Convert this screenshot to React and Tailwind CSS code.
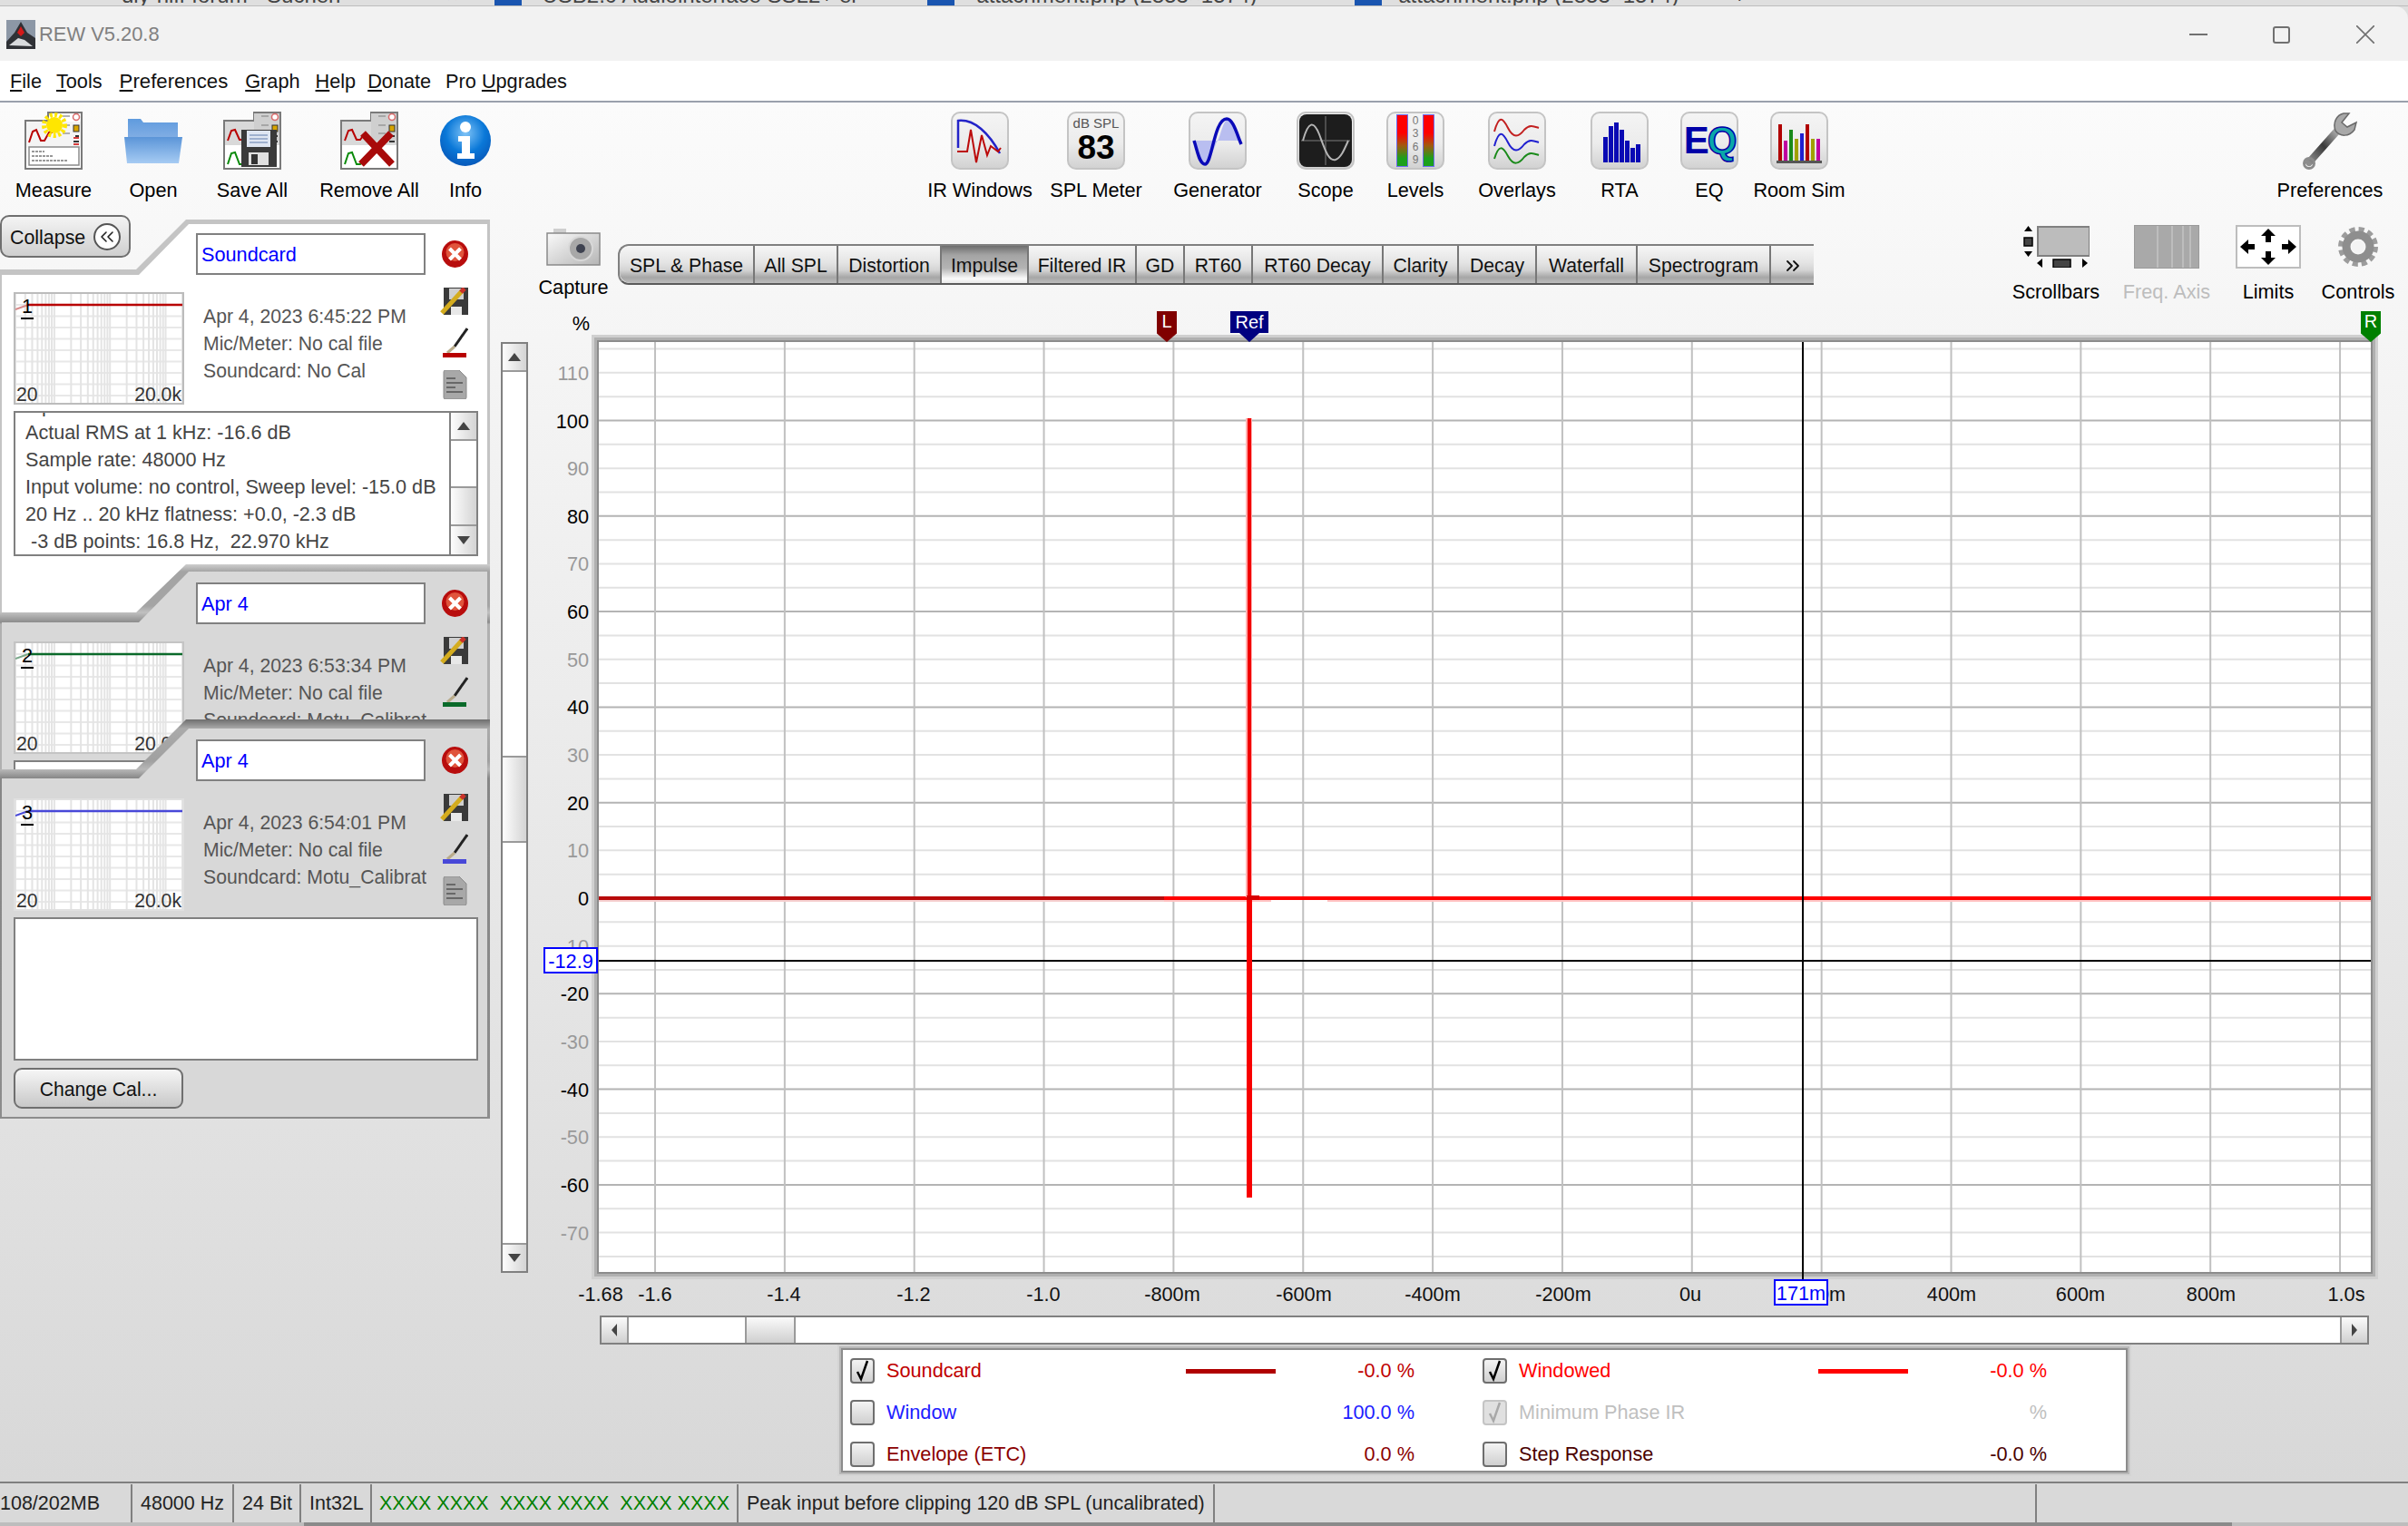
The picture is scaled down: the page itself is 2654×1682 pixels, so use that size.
import React from "react";
import { ChevronsLeft, ChevronsRight } from "lucide-react";

/* ---------- icons ---------- */
const AppIcon = () => (
  <svg width="32" height="32" viewBox="0 0 32 32">
    <rect width="32" height="32" fill="#8c97a6" />
    <path d="M0 24 L9 14 L16 2 L23 14 L32 20 L32 32 L0 32 Z" fill="#2f3136" />
    <path d="M3 28 L13 20 L20 22 L29 29 Z" fill="#d8dadd" />
    <path d="M16 7 L20 14 L16 18 L12 14 Z" fill="#d41919" />
  </svg>
);

const Sun = () => (
  <g>
    <circle cx="33" cy="15" r="9" fill="#ffe600" />
    <circle cx="33" cy="15" r="11.5" fill="none" stroke="#ffe600" strokeWidth="5" strokeDasharray="3 2.4" />
  </g>
);

const SideDots = () => (
  <g>
    <circle cx="57" cy="6" r="3.5" fill="#fff" stroke="#d86a6a" strokeWidth="1.5" />
    <rect x="54" y="15" width="6" height="7" fill="#d7a400" stroke="#333" strokeWidth="1" />
    <path d="M56 27 L60 27 M54 33 L60 33" stroke="#333" strokeWidth="2" />
    <path d="M42 5 H50 M42 15 H50 M42 24 H50" stroke="#999" strokeWidth="1.5" />
  </g>
);

const MeasureIcon = () => (
  <svg width="64" height="64" viewBox="0 0 64 64">
    <path d="M1 10 H26 L26 1 H63 V63 H1 Z" fill="#fff" stroke="#7a7a7a" strokeWidth="2" />
    <path d="M2 40 H62 V11 H2 Z" fill="#f4f4f4" />
    <path d="M5 34 L9 22 L13 20 L18 32 L22 32 L27 23 L31 23" fill="none" stroke="#b80000" strokeWidth="2" />
    <rect x="5" y="39" width="55" height="20" fill="#fff" stroke="#8a8a8a" strokeWidth="1.5" />
    <path d="M8 44 H22 M8 49 H32 M8 54 H48" stroke="#777" strokeWidth="1.5" strokeDasharray="3 1" />
    <SideDots />
    <path d="M54 29 L60 29 M54 36 L60 36" stroke="#c00" strokeWidth="1.5" />
    <Sun />
  </svg>
);

const FolderIcon = () => (
  <svg width="64" height="52" viewBox="0 0 64 52">
    <defs>
      <linearGradient id="fb" x1="0" y1="0" x2="0" y2="1">
        <stop offset="0" stopColor="#5b95d8" />
        <stop offset="1" stopColor="#a6cbf3" />
      </linearGradient>
      <linearGradient id="fa" x1="0" y1="0" x2="0" y2="1">
        <stop offset="0" stopColor="#5f9bde" />
        <stop offset="1" stopColor="#8db4e6" />
      </linearGradient>
    </defs>
    <path d="M4 28 V2 H18 L21 6 H59 V30 Z" fill="url(#fa)" />
    <path d="M0 22 H64 L60 51 H3 Z" fill="url(#fb)" />
  </svg>
);

const TwoPanels = () => (
  <g>
    <path d="M1 10 H34 V1 H63 V63 H1 Z" fill="#fff" stroke="#7a7a7a" strokeWidth="2" />
    <rect x="2" y="11" width="60" height="26" fill="#d9d9d9" />
    <rect x="34" y="2" width="28" height="30" fill="#cfcfcf" />
    <path d="M5 32 L9 21 L13 20 L18 31 L22 31 L27 24" fill="none" stroke="#b80000" strokeWidth="2" />
    <path d="M5 58 L9 46 L13 45 L18 58 L22 58 L27 50" fill="none" stroke="#0a8a0a" strokeWidth="2" />
    <SideDots />
  </g>
);

const SaveAllIcon = () => (
  <svg width="64" height="64" viewBox="0 0 64 64">
    <TwoPanels />
    <path d="M20 20 H59 V61 H20 Z" fill="#3a3a3a" />
    <rect x="26" y="21" width="26" height="18" fill="#dfe6f2" />
    <path d="M29 26 H49 M29 30 H49 M29 34 H49" stroke="#8aa0c4" strokeWidth="1.5" />
    <rect x="28" y="45" width="22" height="14" fill="#e0e0e0" />
    <rect x="31" y="47" width="7" height="11" fill="#333" />
  </svg>
);

const RemoveAllIcon = () => (
  <svg width="64" height="64" viewBox="0 0 64 64">
    <TwoPanels />
    <path d="M23 58 L56 24 M25 24 L57 58" stroke="#a80a0a" strokeWidth="8" />
  </svg>
);

const InfoIcon = () => (
  <svg width="56" height="56" viewBox="0 0 56 56">
    <defs>
      <radialGradient id="ig" cx="0.5" cy="0.35" r="0.7">
        <stop offset="0" stopColor="#7fc3f7" />
        <stop offset="0.55" stopColor="#0a78d8" />
        <stop offset="1" stopColor="#0753b4" />
      </radialGradient>
    </defs>
    <ellipse cx="28" cy="28" rx="28" ry="28" fill="url(#ig)" />
    <circle cx="28" cy="13" r="6" fill="#fff" />
    <path d="M20 23 H33 V42 H38 V48 H19 V42 H24 V29 H20 Z" fill="#fff" />
  </svg>
);

const Box = ({ children }) => (
  <div className="w-[64px] h-[64px] rounded-[10px] border-2 border-[#c4c4c4] bg-[linear-gradient(to_bottom,#f4f4f4,#ececec_55%,#d2d2d2)] overflow-hidden flex items-center justify-center">
    {children}
  </div>
);

const IRIcon = () => (
  <Box>
    <svg width="60" height="60" viewBox="0 0 60 60">
      <path d="M6 38 V8 C24 6 40 22 52 44" fill="none" stroke="#2424c8" strokeWidth="2.5" />
      <path d="M5 42 H16 L20 18 L26 54 L32 24 L38 46 L42 36 L50 42 L53 38" fill="none" stroke="#bb0a0a" strokeWidth="2" />
    </svg>
  </Box>
);

const SplIcon = () => (
  <Box>
    <div className="flex flex-col items-center text-center">
      <span className="text-[15px] leading-[16px] text-[#555]">dB SPL</span>
      <span className="text-[37px] leading-[38px] font-bold text-black">83</span>
    </div>
  </Box>
);

const GenIcon = () => (
  <Box>
    <svg width="60" height="60" viewBox="0 0 60 60">
      <path d="M4 30 H56 V32 C50 18 46 6 42 6 C36 6 32 30 30 30 C26 36 22 56 16 56 C10 56 8 42 4 30 Z" fill="#b9bef0" />
      <path d="M4 30 C8 42 10 56 16 56 C24 56 26 6 40 6 C47 6 51 22 56 34" fill="none" stroke="#0a0ab8" strokeWidth="3.5" />
    </svg>
  </Box>
);

const ScopeIcon = () => (
  <Box>
    <div className="w-[58px] h-[58px] rounded-[8px] bg-[#1d1d1d] flex items-center justify-center">
      <svg width="54" height="54" viewBox="0 0 54 54">
        <path d="M0 27 H54 M27 0 V54" stroke="#5c5c5c" strokeWidth="1.5" />
        <path d="M2 27 C8 5 14 5 20 20 C26 36 30 50 38 48 C44 46 48 36 52 27" fill="none" stroke="#b5b5b5" strokeWidth="2" />
      </svg>
    </div>
  </Box>
);

const LevelsIcon = () => (
  <Box>
    <div className="flex gap-[5px] items-stretch h-[58px]">
      <div className="w-[13px] border border-[#6c6cf0] bg-[linear-gradient(to_bottom,#ff0000_35%,#a05a10_60%,#1ca01c_85%)]" />
      <div className="flex flex-col justify-around text-[12px] leading-[13px] text-[#777]">
        <span>0</span>
        <span>3</span>
        <span>6</span>
        <span>9</span>
      </div>
      <div className="w-[13px] border border-[#6c6cf0] bg-[linear-gradient(to_bottom,#ff0000_35%,#a05a10_60%,#1ca01c_85%)]" />
    </div>
  </Box>
);

const OverlaysIcon = () => (
  <Box>
    <svg width="60" height="60" viewBox="0 0 60 60">
      <path d="M5 20 C10 2 14 4 20 16 C26 28 32 26 38 18 C44 12 48 14 54 16" fill="none" stroke="#c22020" strokeWidth="2" />
      <path d="M5 36 C10 18 14 20 20 32 C26 44 32 42 38 34 C44 28 48 30 54 32" fill="none" stroke="#2020d0" strokeWidth="2" />
      <path d="M5 50 C10 34 14 36 20 47 C26 58 32 56 38 48 C44 42 48 44 54 46" fill="none" stroke="#1a8a1a" strokeWidth="2" />
    </svg>
  </Box>
);

const RtaIcon = () => (
  <Box>
    <svg width="60" height="60" viewBox="0 0 60 60">
      {[
        [12, 26],
        [18, 14],
        [24, 10],
        [30, 18],
        [36, 30],
        [42, 38],
        [48, 34],
      ].map(([x, y]) => (
        <rect key={x} x={x} y={y} width="5" height={54 - y} fill="#0a0ab4" />
      ))}
    </svg>
  </Box>
);

const EqIcon = () => (
  <Box>
    <div className="text-[42px] leading-[46px] font-bold tracking-[-2px] flex">
      <span className="text-[#0000a8]">E</span>
      <span className="text-[#0aa8a8] [-webkit-text-stroke:1.5px_#0000a8]">Q</span>
    </div>
  </Box>
);

const RoomIcon = () => (
  <Box>
    <svg width="60" height="60" viewBox="0 0 60 60">
      {[
        [7, 12, "#b00000"],
        [13, 30, "#c000a0"],
        [19, 18, "#1a8a1a"],
        [25, 28, "#a0a000"],
        [31, 22, "#2020d0"],
        [37, 12, "#b00000"],
        [43, 28, "#a0a000"],
        [49, 28, "#c000a0"],
      ].map(([x, y, c]) => (
        <rect key={x} x={x} y={y} width="4" height={54 - y} fill={c} />
      ))}
      <rect x="5" y="52" width="50" height="3" fill="#555" />
    </svg>
  </Box>
);

const WrenchIcon = () => (
  <svg width="62" height="64" viewBox="0 0 62 64">
    <defs>
      <linearGradient id="wg" x1="0" y1="1" x2="1" y2="0">
        <stop offset="0" stopColor="#8e8e8e" />
        <stop offset="0.5" stopColor="#3a3a3a" />
        <stop offset="1" stopColor="#b8b8b8" />
      </linearGradient>
    </defs>
    <path d="M8 56 L40 20" stroke="url(#wg)" strokeWidth="8" strokeLinecap="round" />
    <circle cx="8" cy="57" r="5.5" fill="none" stroke="#8b8b8b" strokeWidth="3" />
    <path d="M46 2 C38 4 34 12 37 21 C42 28 52 28 58 20 L60 12 L50 17 L44 12 L52 2 Z" fill="#a8a8a8" stroke="#6a6a6a" strokeWidth="1.5" />
  </svg>
);

const CameraIcon = () => (
  <svg width="60" height="41" viewBox="0 0 60 41">
    <defs>
      <linearGradient id="cg" x1="0" y1="0" x2="1" y2="1">
        <stop offset="0" stopColor="#fafafa" />
        <stop offset="1" stopColor="#b5b5b5" />
      </linearGradient>
    </defs>
    <rect x="8" y="0" width="14" height="6" fill="#cfcfcf" />
    <rect x="1" y="5" width="58" height="35" fill="url(#cg)" stroke="#8a8a8a" strokeWidth="1.5" />
    <circle cx="38" cy="22" r="13" fill="#a8a8a8" stroke="#d8d8d8" strokeWidth="2" />
    <circle cx="38" cy="22" r="5" fill="#3e4250" />
  </svg>
);

const ScrollbarsIcon = () => (
  <svg width="73" height="47" viewBox="0 0 73 47">
    <rect x="16" y="2" width="57" height="32" fill="#bcbcbc" stroke="#808080" strokeWidth="2" />
    <path d="M1 7 L5.5 1 L10 7 Z M1 29 L5.5 35 L10 29 Z" fill="#000" />
    <rect x="1" y="14" width="9" height="9" fill="#444" stroke="#000" strokeWidth="1.5" />
    <path d="M21 42 L15 42 L21 37 Z M21 37 V47 L15 42 Z" fill="#000" />
    <rect x="33" y="38" width="19" height="9" fill="#444" stroke="#000" strokeWidth="1.5" />
    <path d="M65 37 L71 42 L65 47 Z" fill="#000" />
  </svg>
);

const FreqIcon = () => (
  <div className="w-[72px] h-[48px] bg-[#a9a9a9] border border-[#9a9a9a] flex">
    <div className="w-[26px] border-r-2 border-[#bdbdbd]" />
    <div className="w-[16px] border-r-2 border-[#bdbdbd]" />
    <div className="w-[12px] border-r-2 border-[#bdbdbd]" />
    <div className="w-[8px] border-r-2 border-[#bdbdbd]" />
  </div>
);

const LimitsIcon = () => (
  <div className="w-[72px] h-[48px] bg-white border-2 border-[#bdbdbd] flex items-center justify-center">
    <svg width="66" height="44" viewBox="0 0 66 44">
      <path d="M33 2 L41 10 L36 10 V17 H30 V10 L25 10 Z" fill="#000" />
      <path d="M33 42 L41 34 L36 34 V27 H30 V34 L25 34 Z" fill="#000" />
      <path d="M2 22 L11 14 V19 H18 V25 H11 V30 Z" fill="#000" />
      <path d="M64 22 L55 14 V19 H48 V25 H55 V30 Z" fill="#000" />
    </svg>
  </div>
);

const GearIcon = () => (
  <svg width="44" height="48" viewBox="0 0 44 44">
    <circle cx="22" cy="22" r="19" fill="none" stroke="#9c9c9c" strokeWidth="6" strokeDasharray="6 3.95" />
    <circle cx="22" cy="22" r="13" fill="none" stroke="#8e8e8e" strokeWidth="9" />
    <circle cx="22" cy="22" r="7" fill="#f4f4f4" />
  </svg>
);

const DeleteIcon = () => (
  <svg width="29" height="30" viewBox="0 0 29 30" className="shrink-0">
    <ellipse cx="14.5" cy="15" rx="14.5" ry="15" fill="#b80d0d" />
    <ellipse cx="14.5" cy="13" rx="10" ry="10" fill="#e0543c" />
    <path d="M8.5 9 L20.5 21 M20.5 9 L8.5 21" stroke="#fff" strokeWidth="4" />
  </svg>
);

const SaveIcon = () => (
  <svg width="32" height="30" viewBox="0 0 32 30">
    <path d="M4 0 H31 V30 H4 Z" fill="#3a3a3a" />
    <rect x="10" y="1" width="16" height="12" fill="#cfcfcf" />
    <rect x="12" y="21" width="12" height="9" fill="#e8e8e8" />
    <path d="M2 28 L24 4" stroke="#d4ac1e" strokeWidth="5" />
    <path d="M23 5 L27 1" stroke="#c8322a" strokeWidth="5" />
  </svg>
);

const PenIcon = ({ color }) => (
  <svg width="29" height="33" viewBox="0 0 29 33">
    <path d="M14 21 L28 1" stroke="#222" strokeWidth="3" />
    <path d="M6 28 L14 21" stroke="#b9ab8a" strokeWidth="3" />
    <rect x="1" y="28" width="26" height="5" fill={color} />
  </svg>
);

const DocIcon = () => (
  <svg width="27" height="32" viewBox="0 0 27 32">
    <path d="M1 2 Q1 0 3 0 H18 L26 8 V30 Q26 32 24 32 H3 Q1 32 1 30 Z" fill="#a8a8a8" stroke="#8a8a8a" />
    <path d="M4 9 H14 M4 14 H22 M4 19 H14 M4 24 H22" stroke="#686868" strokeWidth="2" />
  </svg>
);

/* ---------- small pieces ---------- */
const ToolBtn = ({ className, icon, label }) => (
  <div className={`flex flex-col items-center shrink-0 ${className}`}>
    <div className="h-[64px] mt-[10px] flex items-center justify-center">{icon}</div>
    <span className="mt-[10px] leading-[26px] whitespace-nowrap text-black">{label}</span>
  </div>
);

const Tri = ({ dir, className = "" }) => {
  const d = { up: "M0 9 L7 0 L14 9 Z", down: "M0 0 L14 0 L7 9 Z", left: "M9 0 V14 L3 7 Z", right: "M3 0 V14 L9 7 Z" }[dir];
  const s = dir === "up" || dir === "down" ? [14, 9] : [12, 14];
  return (
    <svg width={s[0]} height={s[1]} viewBox={`0 0 ${s[0]} ${s[1]}`} className={className}>
      <path d={d} fill="#444" />
    </svg>
  );
};

const sbV = "bg-[linear-gradient(to_right,#fdfdfd,#d4d4d4)]";

const VScroll = ({ className, upH, topTrack, thumbH }) => (
  <div className={`flex flex-col bg-white border-2 border-[#808080] shrink-0 ${className}`}>
    <div className={`${upH} ${sbV} border-b-2 border-[#9a9a9a] flex items-center justify-center shrink-0`}>
      <Tri dir="up" />
    </div>
    <div className={`${topTrack} shrink-0`} />
    <div className={`${thumbH} ${sbV} border-y-2 border-[#9a9a9a] shrink-0`} />
    <div className="flex-1" />
    <div className={`${upH} ${sbV} border-t-2 border-[#9a9a9a] flex items-center justify-center shrink-0`}>
      <Tri dir="down" />
    </div>
  </div>
);

const Thumb = ({ n, color, pale, bg }) => {
  const xs = [];
  for (const d of [1, 10, 100, 1000]) {
    for (let m = d === 1 ? 2 : 1; m <= 9; m++) {
      const f = m * d * 10;
      if (f >= 20 && f <= 20000) xs.push((184 * Math.log10(f / 20)) / 3);
    }
  }
  xs.push(184);
  const ys = [];
  for (let y = 12; y < 120; y += 12.5) ys.push(y);
  return (
    <div className={`relative w-[188px] h-[124px] bg-white border-2 ${bg} shrink-0 overflow-hidden`}>
      <svg width="184" height="120" viewBox="0 0 184 120" className="block">
        {ys.map((y) => (
          <line key={y} x1="0" x2="184" y1={y} y2={y} stroke="#e8e8e8" strokeWidth="2" />
        ))}
        {xs.map((x) => (
          <line key={x} x1={x} x2={x} y1="0" y2="120" stroke="#e4e4e4" strokeWidth="2" />
        ))}
        <path d="M0 17 L14 12" stroke={pale} strokeWidth="2" fill="none" />
        <path d="M14 12 H184" stroke={color} strokeWidth="2.5" fill="none" />
      </svg>
      <span className="absolute left-[7px] top-[2px] leading-[24px] text-black">{n}</span>
      <span className="absolute left-[6px] top-[26px] w-[14px] h-[2px] bg-black" />
      <span className="absolute left-[1px] -bottom-[3px] leading-[24px] text-[#333] text-[21.2px]">20</span>
      <span className="absolute right-[1px] -bottom-[3px] leading-[24px] text-[#333] text-[21.2px]">20.0k</span>
    </div>
  );
};

const PanelHead = ({ name }) => (
  <div className="flex items-start ml-[214px]">
    <div className="w-[253px] h-[46px] bg-white border-2 border-[#808080] pl-[4px] pt-[2px] flex items-center text-[#0000ff]">{name}</div>
    <div className="ml-[18px] mt-[8px]">
      <DeleteIcon />
    </div>
  </div>
);

const PanelInfo = ({ n, color, pale, thumbBorder, date, card, rowH = "h-[150px]" }) => (
  <div className={`flex ${rowH} items-start`}>
    <div className="ml-[13px] mt-[19px]">
      <Thumb n={n} color={color} pale={pale} bg={thumbBorder} />
    </div>
    <div className="ml-[21px] mt-[31px] w-[246px] overflow-hidden text-[#555] text-[21.2px] leading-[30px] whitespace-nowrap shrink-0">
      <div>{date}</div>
      <div>Mic/Meter: No cal file</div>
      <div>{card}</div>
    </div>
    <div className="ml-[15px] mt-[14px] flex flex-col items-center w-[32px] gap-[14px] shrink-0">
      <SaveIcon />
      <PenIcon color={color} />
      <DocIcon />
    </div>
  </div>
);

const CHECK = (
  <svg width="22" height="24" viewBox="0 0 22 24">
    <path d="M5 13 L9 21 L16 1" fill="none" stroke="currentColor" strokeWidth="2.5" />
  </svg>
);

const Check = ({ on, disabled }) => (
  <div
    className={`w-[27px] h-[28px] rounded-[4px] border-2 shrink-0 flex items-center justify-center ${
      disabled
        ? "border-[#c4c4c4] bg-[#e0e0e0] text-[#a8a8a8]"
        : "border-[#6e6e6e] bg-[linear-gradient(to_bottom,#f4f4f4,#d0d0d0)] text-black"
    }`}
  >
    {on && CHECK}
  </div>
);

const LegendCell = ({ on, disabled, label, swatch, value, color, className = "" }) => (
  <div className={`flex items-center shrink-0 ${className}`} style={{ color }}>
    <Check on={on} disabled={disabled} />
    <span className="ml-[13px] w-[330px] whitespace-nowrap">{label}</span>
    <div className="w-[99px] flex items-center">{swatch && <div className="w-full h-[5px]" style={{ background: swatch }} />}</div>
    <span className="w-[153px] text-right whitespace-nowrap">{value}</span>
  </div>
);

const Tab = ({ w, label, active, first, last }) => (
  <div
    className={`${w} shrink-0 h-full flex items-center justify-center pt-[2px] whitespace-nowrap text-[21.2px] text-[#111] ${last ? "" : "border-r-2 border-[#777]"} ${first ? "rounded-l-[12px]" : ""} ${
      active
        ? "bg-[linear-gradient(to_bottom,#6e6e6e,#a4a4a4_25%,#b4b4b4_60%,#fafafa_88%,#e8e8e8)]"
        : "bg-[linear-gradient(to_bottom,#f6f6f6,#e4e4e4_45%,#d4d4d4_65%,#a6a6a6_85%,#bcbcbc)]"
    }`}
  >
    {label}
  </div>
);

/* ---------- chart data ---------- */
const Y0 = 613;
const UNIT = 5.265;
const yOf = (v) => Y0 - v * UNIT;
const hLines = [];
for (let v = -75; v <= 115; v += 5) hLines.push(v);
const vLines = [];
for (let i = 0; i <= 13; i++) vLines.push(62 + 142.85 * i);
const yLabels = [];
for (let v = 110; v >= -70; v -= 10) yLabels.push(v);
const xLabels = [
  ["-1.68", 2],
  ["-1.6", 62],
  ["-1.4", 204],
  ["-1.2", 347],
  ["-1.0", 490],
  ["-800m", 632],
  ["-600m", 777],
  ["-400m", 919],
  ["-200m", 1063],
  ["0u", 1203],
  ["200m", 1347],
  ["400m", 1491],
  ["600m", 1633],
  ["800m", 1777],
  ["1.0s", 1926],
];

const Plot = () => (
  <svg width="1953" height="1025" viewBox="0 0 1953 1025" className="block overflow-visible">
    {hLines.map((v) => (
      <line key={v} x1="0" x2="1953" y1={yOf(v)} y2={yOf(v)} stroke={v % 20 === 0 ? "#b4b4b4" : "#e2e2e2"} strokeWidth="2" />
    ))}
    {vLines.map((x) => (
      <line key={x} x1={x} x2={x} y1="0" y2="1025" stroke="#c0c0c0" strokeWidth="2" />
    ))}
    <rect x="0" y="615" width="625" height="2" fill="#f6d0d0" />
    <rect x="0" y="611" width="623" height="4" fill="#b80a0a" />
    <rect x="623" y="615" width="118" height="2" fill="#ffc4c4" />
    <rect x="803" y="615" width="1150" height="2" fill="#ffc4c4" />
    <rect x="623" y="611" width="1330" height="4" fill="#ff0000" />
    <rect x="1326" y="0" width="2" height="1033" fill="#000" />
    <rect x="0" y="681" width="1953" height="2" fill="#000" />
    <rect x="713" y="84" width="7" height="528" fill="#ffb0b0" />
    <rect x="715" y="84" width="4" height="528" fill="#f20000" />
    <rect x="714" y="611" width="6" height="332" fill="#f80000" />
    <rect x="714" y="610" width="14" height="5" fill="#d80000" />
  </svg>
);

/* ---------- page ---------- */
export default function App() {
  return (
    <div className="w-[2654px] h-[1682px] overflow-hidden flex flex-col bg-[#dfdfdf] text-[21.7px] leading-[26px] font-['Liberation_Sans',Arial,sans-serif]">
      {/* browser tabs peeking above the window */}
      <div className="h-[7px] shrink-0 overflow-hidden flex items-start text-[24px] leading-[24px] text-[#444] whitespace-nowrap border-b border-[#bcbcbc]">
        <span className="ml-[134px] -mt-[17px]">diy-hifi-forum - Suchen</span>
        <span className="ml-[116px] -mt-[17px]">×</span>
        <div className="ml-[40px] w-[30px] h-[7px] bg-[#1a55b0]" />
        <span className="ml-[22px] -mt-[17px]">USB2.0 Audiointerface SSL2+ er</span>
        <div className="ml-[76px] w-[30px] h-[7px] bg-[#1a55b0]" />
        <span className="ml-[24px] -mt-[17px]">attachment.php (2853×1574)</span>
        <div className="ml-[108px] w-[30px] h-[7px] bg-[#1a55b0]" />
        <span className="ml-[18px] -mt-[17px]">attachment.php (2853×1574)</span>
        <span className="ml-[60px] -mt-[17px]">+</span>
      </div>

      {/* title bar */}
      <div className="h-[60px] shrink-0 bg-[#f2f2f2] rounded-tr-[14px] flex items-center pt-[2px] text-[#808080]">
        <div className="ml-[7px]">
          <AppIcon />
        </div>
        <span className="ml-[4px] text-[21.9px]">REW V5.20.8</span>
        <div className="ml-auto flex items-center mr-[37px]">
          <svg width="20" height="20" viewBox="0 0 20 20">
            <rect x="0" y="9" width="20" height="2" fill="#707070" />
          </svg>
          <div className="ml-[72px] w-[19px] h-[19px] rounded-[3px] border-2 border-[#707070]" />
          <svg width="20" height="20" viewBox="0 0 20 20" className="ml-[73px]">
            <path d="M0 0 L20 20 M20 0 L0 20" stroke="#707070" strokeWidth="1.6" />
          </svg>
        </div>
      </div>

      {/* menu bar */}
      <div className="h-[46px] shrink-0 bg-white border-b-2 border-[#9aa0ac] flex items-center pt-[1px] text-[#111] pl-[11px]">
        <span>
          <u>F</u>ile
        </span>
        <span className="ml-[16px]">
          <u>T</u>ools
        </span>
        <span className="ml-[19px] text-[22.2px]">
          <u>P</u>references
        </span>
        <span className="ml-[19px]">
          <u>G</u>raph
        </span>
        <span className="ml-[17px]">
          <u>H</u>elp
        </span>
        <span className="ml-[13px]">
          <u>D</u>onate
        </span>
        <span className="ml-[16px]">
          Pro <u>U</u>pgrades
        </span>
      </div>

      {/* window content */}
      <div className="flex-1 flex flex-col min-h-0 bg-[linear-gradient(to_bottom,#fbfbfb,#d8d8d8)]">
        {/* toolbar */}
        <div className="h-[112px] shrink-0 flex pl-[4px]">
          <ToolBtn className="w-[110px]" icon={<MeasureIcon />} label="Measure" />
          <ToolBtn className="w-[110px]" icon={<FolderIcon />} label="Open" />
          <ToolBtn className="w-[108px]" icon={<SaveAllIcon />} label="Save All" />
          <ToolBtn className="w-[150px]" icon={<RemoveAllIcon />} label="Remove All" />
          <ToolBtn className="w-[62px]" icon={<InfoIcon />} label="Info" />
          <ToolBtn className="w-[130px] ml-[471px]" icon={<IRIcon />} label="IR Windows" />
          <ToolBtn className="w-[126px]" icon={<SplIcon />} label="SPL Meter" />
          <ToolBtn className="w-[142px]" icon={<GenIcon />} label="Generator" />
          <ToolBtn className="w-[96px]" icon={<ScopeIcon />} label="Scope" />
          <ToolBtn className="w-[102px]" icon={<LevelsIcon />} label="Levels" />
          <ToolBtn className="w-[122px]" icon={<OverlaysIcon />} label="Overlays" />
          <ToolBtn className="w-[104px]" icon={<RtaIcon />} label="RTA" />
          <ToolBtn className="w-[94px]" icon={<EqIcon />} label="EQ" />
          <ToolBtn className="w-[104px]" icon={<RoomIcon />} label="Room Sim" />
          <ToolBtn className="w-[140px] ml-[463px]" icon={<WrenchIcon />} label="Preferences" />
        </div>

        <div className="flex-1 flex min-h-0">
          {/* left column: stacked measurement panels */}
          <div className="w-[552px] shrink-0 flex flex-col">
            <div className="relative z-10 mt-[12px] w-[144px] h-[47px] shrink-0 rounded-[10px] border-2 border-[#6f6f6f] bg-[linear-gradient(to_bottom,#f4f4f4,#cfcfcf)] flex items-center pl-[9px] pt-[2px] text-[#111]">
              <span className="text-[21.4px]">Collapse</span>
              <div className="ml-[9px] -mt-[2px] w-[30px] h-[30px] rounded-full bg-white border-2 border-[#555] flex items-center justify-center">
                <ChevronsLeft size={24} strokeWidth={1.6} color="#222" />
              </div>
            </div>

            {/* panel 1 */}
            <div className="relative -mt-[42px] w-[540px] h-[448px] shrink-0 bg-[#c4c4c4] pt-[5px] pl-[2px] pr-[3px] [clip-path:polygon(0_55px,150px_55px,205px_0,100%_0,100%_100%,0_100%)]">
              <div className="h-full bg-white pt-[10px] [clip-path:polygon(0_56px,151px_56px,206px_0,100%_0,100%_100%,0_100%)]">
                <PanelHead name="Soundcard" />
                <PanelInfo n="1" color="#b80000" pale="#d88a8a" thumbBorder="border-[#bcbcbc]" date="Apr 4, 2023 6:45:22 PM" card="Soundcard: No Cal" />
                <div className="ml-[13px] w-[512px] h-[160px] border-2 border-[#808080] flex overflow-hidden bg-white">
                  <div className="flex-1 min-w-0 pl-[11px] text-[#444] text-[21.6px] leading-[30px] whitespace-pre overflow-hidden">
                    <div className="-mt-[23px]">Input level: -14.6 dB</div>
                    <div>Actual RMS at 1 kHz: -16.6 dB</div>
                    <div>Sample rate: 48000 Hz</div>
                    <div>Input volume: no control, Sweep level: -15.0 dB</div>
                    <div>20 Hz .. 20 kHz flatness: +0.0, -2.3 dB</div>
                    <div> -3 dB points: 16.8 Hz,  22.970 kHz</div>
                  </div>
                  <div className="w-[30px] shrink-0 flex flex-col border-l-2 border-[#808080]">
                    <div className={`h-[31px] ${sbV} border-b-2 border-[#9a9a9a] flex items-center justify-center`}>
                      <Tri dir="up" />
                    </div>
                    <div className="h-[50px]" />
                    <div className={`h-[44px] ${sbV} border-y-2 border-[#9a9a9a]`} />
                    <div className={`flex-1 ${sbV} flex items-center justify-center`}>
                      <Tri dir="down" />
                    </div>
                  </div>
                </div>
              </div>
            </div>

            {/* panel 2 */}
            <div className="relative -mt-[68px] w-[540px] h-[238px] shrink-0 bg-[linear-gradient(to_bottom,#cecece,#a4a4a4_8px,#a4a4a4_46px,#c0c0c0_53px,#8c8c8c_64px,#b0b0b0_66px)] pt-[8px] pl-[2px] pr-[3px] [clip-path:polygon(0_53px,150px_53px,205px_0,100%_0,100%_100%,0_100%)]">
              <div className="h-full bg-[#d8d8d8] pt-[12px] [clip-path:polygon(0_56px,151px_56px,206px_0,100%_0,100%_100%,0_100%)]">
                <PanelHead name="Apr 4" />
                <PanelInfo n="2" color="#0a6a2a" pale="#7aa88a" thumbBorder="border-[#c4c4c4]" date="Apr 4, 2023 6:53:34 PM" card="Soundcard: Motu_Calibrat" />
                <div className="ml-[13px] w-[512px] h-[160px] border-2 border-[#808080] bg-white" />
              </div>
            </div>

            {/* panel 3 */}
            <div className="relative -mt-[67px] w-[540px] h-[440px] shrink-0 bg-[linear-gradient(to_bottom,#6e6e6e,#aaaaaa_10px,#a0a0a0_46px,#b8b8b8_55px,#868686_65px,#8c8c8c)] pt-[10px] pl-[2px] pr-[3px] pb-[2px] [clip-path:polygon(0_55px,150px_55px,205px_0,100%_0,100%_100%,0_100%)]">
              <div className="h-full bg-[#d8d8d8] pt-[12px] [clip-path:polygon(0_55px,151px_55px,206px_0,100%_0,100%_100%,0_100%)]">
                <PanelHead name="Apr 4" />
                <PanelInfo n="3" color="#4848d8" pale="#4848d8" thumbBorder="border-[#e0e0e0]" date="Apr 4, 2023 6:54:01 PM" card="Soundcard: Motu_Calibrat" rowH="h-[148px]" />
                <div className="ml-[13px] mt-[2px] w-[512px] h-[158px] border-2 border-[#808080] bg-white" />
                <div className="ml-[13px] mt-[8px] w-[187px] h-[45px] rounded-[9px] border-2 border-[#6f6f6f] bg-[linear-gradient(to_bottom,#f6f6f6,#c8c8c8)] flex items-center justify-center pt-[2px] text-[21.2px] text-[#111]">
                  Change Cal...
                </div>
              </div>
            </div>
          </div>

          {/* right column */}
          <div className="flex-1 min-w-0 flex flex-col">
            {/* graph selector row */}
            <div className="h-[118px] shrink-0 flex items-start">
              <div className="ml-[31px] w-[100px] pt-[27px] flex flex-col items-center">
                <CameraIcon />
                <span className="mt-[11px] leading-[26px] text-black">Capture</span>
              </div>
              <div className="mt-[44px] h-[45px] flex rounded-l-[12px] border-y-2 border-l-2 border-t-[#808080] border-b-[#5a5a5a] border-l-[#808080]">
                <Tab w="w-[149px]" label="SPL & Phase" first />
                <Tab w="w-[92px]" label="All SPL" />
                <Tab w="w-[114px]" label="Distortion" />
                <Tab w="w-[96px]" label="Impulse" active />
                <Tab w="w-[119px]" label="Filtered IR" />
                <Tab w="w-[53px]" label="GD" />
                <Tab w="w-[75px]" label="RT60" />
                <Tab w="w-[144px]" label="RT60 Decay" />
                <Tab w="w-[83px]" label="Clarity" />
                <Tab w="w-[86px]" label="Decay" />
                <Tab w="w-[111px]" label="Waterfall" />
                <Tab w="w-[147px]" label="Spectrogram" />
                <Tab w="w-[47px]" label={<ChevronsRight size={24} strokeWidth={1.8} color="#111" />} last />
              </div>
              <div className="ml-[207px] w-[120px] pt-[23px] flex flex-col items-center shrink-0">
                <div className="h-[48px]">
                  <ScrollbarsIcon />
                </div>
                <span className="mt-[13px] text-black whitespace-nowrap">Scrollbars</span>
              </div>
              <div className="ml-[7px] w-[110px] pt-[23px] flex flex-col items-center shrink-0">
                <FreqIcon />
                <span className="mt-[13px] text-[#bdbdbd] whitespace-nowrap">Freq. Axis</span>
              </div>
              <div className="ml-[17px] w-[80px] pt-[23px] flex flex-col items-center shrink-0">
                <LimitsIcon />
                <span className="mt-[13px] text-black">Limits</span>
              </div>
              <div className="ml-[4px] w-[110px] pt-[23px] flex flex-col items-center shrink-0">
                <GearIcon />
                <span className="mt-[13px] text-black">Controls</span>
              </div>
            </div>

            {/* chart */}
            <div className="h-[1059px] shrink-0 pt-[34px] flex items-start">
              <VScroll className="w-[30px] h-[1026px]" upH="h-[31px]" topTrack="h-[423px]" thumbH="h-[96px]" />
              <div className="relative ml-[78px] w-[1953px] h-[1025px] bg-white shadow-[0_0_0_2px_#8c8c8c,0_0_0_5px_#b0b0b0,0_0_0_8px_#d0d0d0]">
                <Plot />
                <span className="absolute right-[calc(100%+10px)] -top-[33px] leading-[26px] text-black font-medium">%</span>
                {yLabels.map((v) => (
                  <span
                    key={v}
                    className={`absolute right-[calc(100%+11px)] leading-[26px] whitespace-nowrap ${v % 20 === 0 ? "text-black" : "text-[#999]"}`}
                    style={{ top: yOf(v) - 12 }}
                  >
                    {v}
                  </span>
                ))}
                <div className="absolute -left-[61px] top-[667px] w-[60px] h-[29px] pt-[2px] bg-white border-2 border-[#0000ff] text-[#0000ff] flex items-center justify-center">-12.9</div>
                <div className="absolute left-[615px] -top-[34px] w-[22px] h-[34px] bg-[#800000] text-white text-center text-[20px] leading-[22px] [clip-path:polygon(0_0,100%_0,100%_72%,50%_100%,0_72%)]">L</div>
                <div className="absolute left-[696px] -top-[34px] w-[42px] h-[34px] bg-[#000080] text-white text-center text-[20px] leading-[24px] [clip-path:polygon(0_0,100%_0,100%_24px,32px_24px,50%_100%,10px_24px,0_24px)]">Ref</div>
                <div className="absolute left-[1942px] -top-[34px] w-[22px] h-[34px] bg-[#008000] text-white text-center text-[20px] leading-[22px] [clip-path:polygon(0_0,100%_0,100%_72%,50%_100%,0_72%)]">R</div>
              </div>
            </div>

            {/* x axis labels */}
            <div className="relative h-[48px] shrink-0 ml-[108px] w-[1953px]">
              {xLabels.map(([t, x]) => (
                <span key={t} className="absolute top-[12px] leading-[26px] -translate-x-1/2 whitespace-nowrap text-[#111]" style={{ left: x }}>
                  {t}
                </span>
              ))}
              <div className="absolute left-[1295px] top-[8px] w-[60px] h-[29px] pt-[2px] bg-white border-2 border-[#0000ff] text-[#0000ff] flex items-center justify-center">171m</div>
            </div>

            {/* horizontal scrollbar */}
            <div className="ml-[109px] w-[1950px] h-[32px] shrink-0 flex bg-white border-2 border-[#808080]">
              <div className="w-[30px] bg-[linear-gradient(to_bottom,#fafafa,#d0d0d0)] border-r-2 border-[#9a9a9a] flex items-center justify-center">
                <Tri dir="left" />
              </div>
              <div className="w-[128px]" />
              <div className="w-[56px] bg-[linear-gradient(to_bottom,#fafafa,#cfcfcf)] border-x-2 border-[#9a9a9a]" />
              <div className="flex-1" />
              <div className="w-[30px] bg-[linear-gradient(to_bottom,#fafafa,#d0d0d0)] border-l-2 border-[#9a9a9a] flex items-center justify-center">
                <Tri dir="right" />
              </div>
            </div>

            {/* legend */}
            <div className="ml-[377px] mt-[6px] w-[1414px] h-[133px] shrink-0 bg-white shadow-[0_0_0_2px_#8c8c8c,0_0_0_4px_#b8b8b8,0_0_0_6px_#d4d4d4] flex flex-col pl-[8px]">
              <div className="h-[46px] shrink-0 flex">
                <LegendCell on label="Soundcard" swatch="#b00000" value="-0.0 %" color="#c00000" />
                <LegendCell on className="ml-[75px]" label="Windowed" swatch="#ff0000" value="-0.0 %" color="#ff0000" />
              </div>
              <div className="h-[46px] shrink-0 flex">
                <LegendCell label="Window" value="100.0 %" color="#2020ff" />
                <LegendCell on disabled className="ml-[75px]" label="Minimum Phase IR" value="%" color="#c0c0c0" />
              </div>
              <div className="h-[46px] shrink-0 flex">
                <LegendCell label="Envelope (ETC)" value="0.0 %" color="#8b0000" />
                <LegendCell className="ml-[75px]" label="Step Response" value="-0.0 %" color="#4a0000" />
              </div>
            </div>
          </div>
        </div>
      </div>

      {/* status bar */}
      <div className="h-[45px] shrink-0 bg-[#d9d9d9] border-t-2 border-[#808080] flex items-stretch pt-[1px] text-[21.5px] text-[#222] whitespace-pre">
        <div className="w-[146px] border-r-2 border-[#808080] flex items-center">108/202MB</div>
        <div className="w-[112px] border-r-2 border-[#808080] flex items-center pl-[9px]">48000 Hz</div>
        <div className="w-[74px] border-r-2 border-[#808080] flex items-center pl-[9px]">24 Bit</div>
        <div className="w-[78px] border-r-2 border-[#808080] flex items-center pl-[9px]">Int32L</div>
        <div className="w-[404px] border-r-2 border-[#808080] flex items-center pl-[8px] text-[#008000]">XXXX XXXX  XXXX XXXX  XXXX XXXX</div>
        <div className="w-[525px] border-r-2 border-[#808080] flex items-center pl-[9px]">Peak input before clipping 120 dB SPL (uncalibrated)</div>
        <div className="w-[906px] border-r-2 border-[#808080]" />
      </div>
      <div className="h-[4px] shrink-0 flex">
        <div className="w-[335px] bg-[#bdbdbd]" />
        <div className="w-[2125px] bg-[#8a8a8a]" />
        <div className="flex-1 bg-[#bdbdbd]" />
      </div>
    </div>
  );
}
